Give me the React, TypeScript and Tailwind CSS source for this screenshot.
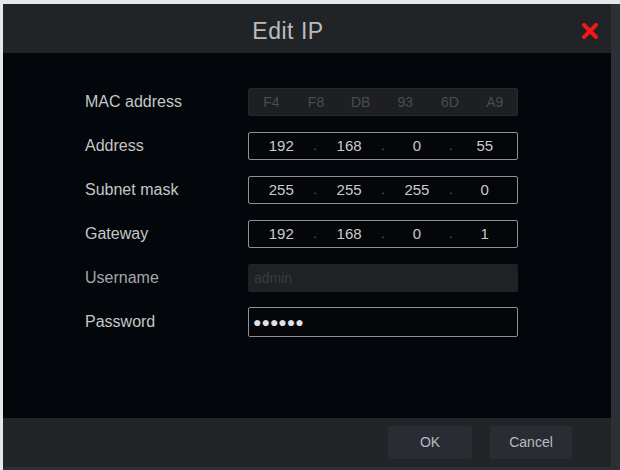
import React from 'react';

const font = { fontFamily: '"Liberation Sans", Arial, sans-serif' };

function IpField({ parts }: { parts: string[] }) {
  return (
    <div className="flex items-center w-[270px] h-[28px] border border-[#8e9094] rounded-[2px] bg-[#04060a] text-[15px] text-[#cbcbcb]">
      {parts.map((p, i) => (
        <React.Fragment key={i}>
          <span className="flex-1 text-center">{p}</span>
          {i < parts.length - 1 && <span className="text-[#6d6f73] text-[12px]">.</span>}
        </React.Fragment>
      ))}
    </div>
  );
}

function Row({ label, dim, children }: { label: string; dim?: boolean; children: React.ReactNode }) {
  return (
    <div className="flex items-center h-[28px]">
      <div className={`w-[163px] text-[16px] ${dim ? 'text-[#a4a6a9]' : 'text-[#c6c6c6]'}`}>{label}</div>
      {children}
    </div>
  );
}

export default function App() {
  const mac = ['F4', 'F8', 'DB', '93', '6D', 'A9'];

  return (
    <div className="w-[620px] h-[470px] bg-[#2c2f33] border-t-4 border-l-[3px] border-[#e6e7e8] overflow-hidden" style={font}>
      <div className="w-[608px] h-[463px] flex flex-col">
        {/* Header */}
        <div className="relative h-[49px] bg-[#212427] flex items-center justify-center pr-[38px] pt-[6px]">
          <span className="text-[23px] text-[#bcbcbc] tracking-[0.5px]">Edit IP</span>
          <svg className="absolute left-[579px] top-[19px]" width="16" height="16" viewBox="0 0 16 16">
            <path d="M2 2 L14 14 M14 2 L2 14" stroke="#f51616" strokeWidth="4" strokeLinecap="square" />
          </svg>
        </div>

        {/* Body */}
        <div className="flex-1 bg-[#03060a] pt-[35px] pl-[82px] flex flex-col gap-[16px]">
          <Row label="MAC address">
            <div className="flex items-center w-[270px] h-[28px] rounded-[2px] bg-[#1d1f22] border border-[#26282b] text-[14px] text-[#4a4c50]">
              {mac.map((m) => (
                <span key={m} className="flex-1 text-center">{m}</span>
              ))}
            </div>
          </Row>
          <Row label="Address">
            <IpField parts={['192', '168', '0', '55']} />
          </Row>
          <Row label="Subnet mask">
            <IpField parts={['255', '255', '255', '0']} />
          </Row>
          <Row label="Gateway">
            <IpField parts={['192', '168', '0', '1']} />
          </Row>
          <Row label="Username" dim>
            <div className="flex items-center w-[270px] h-[28px] rounded-[2px] bg-[#1f2124] px-[6px] text-[14px] text-[#3a3c40]">
              admin
            </div>
          </Row>
          <Row label="Password">
            <div className="flex items-center w-[270px] h-[30px] border border-[#8e9094] rounded-[2px] bg-[#04060a] px-[4px] text-[14px] text-[#e0e0e0]">
              ●●●●●●
            </div>
          </Row>
        </div>

        {/* Footer */}
        <div className="h-[49px] bg-[#212528] flex items-center justify-end gap-[18px] pr-[39px]">
          <button className="w-[84px] h-[33px] rounded-[2px] bg-[#2a2c33] text-[14px] text-[#b9bbc0]">OK</button>
          <button className="w-[82px] h-[33px] rounded-[2px] bg-[#2a2c33] text-[14px] text-[#b9bbc0]">Cancel</button>
        </div>
      </div>
    </div>
  );
}
